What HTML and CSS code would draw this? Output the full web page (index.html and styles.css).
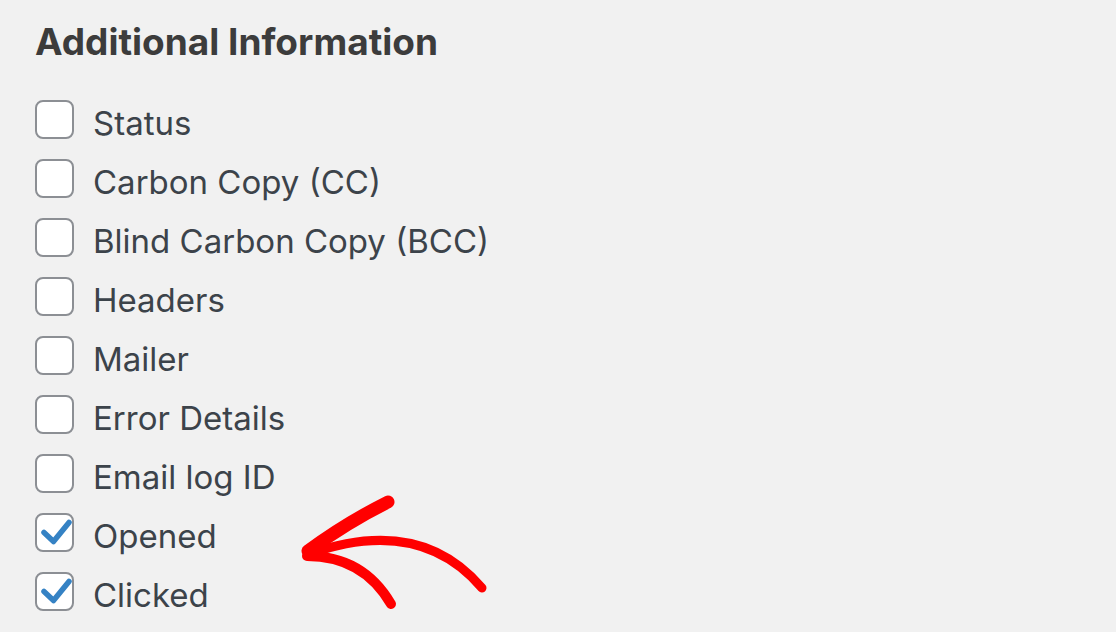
FILE: index.html
```html
<!DOCTYPE html>
<html lang="en">
<head>
    <meta charset="UTF-8">
    <meta name="viewport" content="width=device-width, initial-scale=1.0">
    <title>Additional Information</title>
    <link rel="stylesheet" href="styles.css">
</head>
<body>
    <div class="panel">
        <h2>Additional Information</h2>

        <ul class="field-list">
            <li class="field"><span class="check-box"></span><span class="field-label">Status</span></li>
            <li class="field"><span class="check-box"></span><span class="field-label">Carbon Copy (CC)</span></li>
            <li class="field"><span class="check-box"></span><span class="field-label">Blind Carbon Copy (BCC)</span></li>
            <li class="field"><span class="check-box"></span><span class="field-label">Headers</span></li>
            <li class="field"><span class="check-box"></span><span class="field-label">Mailer</span></li>
            <li class="field"><span class="check-box"></span><span class="field-label">Error Details</span></li>
            <li class="field"><span class="check-box"></span><span class="field-label">Email log ID</span></li>
            <li class="field">
                <span class="check-box checked">
                    <svg viewBox="0 0 39 39"><path d="M9 19.5 L18.5 28.5 L34 9.5" /></svg>
                </span>
                <span class="field-label">Opened</span>
            </li>
            <li class="field">
                <span class="check-box checked">
                    <svg viewBox="0 0 39 39"><path d="M9 19.5 L18.5 28.5 L34 9.5" /></svg>
                </span>
                <span class="field-label">Clicked</span>
            </li>
        </ul>
    </div>

    <!-- hand-drawn annotation arrow -->
    <svg class="annotation" viewBox="0 0 1116 632">
        <path class="stroke-upper" d="M308 551 Q346 523 388 502" />
        <path class="stroke-shaft" d="M309 554 Q420 515 482 588" />
        <path class="stroke-lower" d="M307 556 Q363 556 391 604" />
    </svg>
</body>
</html>
```

FILE: styles.css
```css
body {
    font-family: Inter, "Liberation Sans", Arial, sans-serif;
    background-color: #f1f1f1;
    color: #3c434a;
    margin: 0;
    padding: 0;
    min-height: 632px;
}

.panel {
    padding: 19px 0 0 35px;
}

h2 {
    font-size: 37px;
    font-weight: 700;
    color: #3c3c3c;
    margin: 0 0 25px 0;
    line-height: 46px;
}

.field-list {
    list-style: none;
    margin: 0;
    padding: 0;
}

.field {
    display: flex;
    align-items: center;
    gap: 19px;
    height: 59px;
}

.check-box {
    position: relative;
    box-sizing: border-box;
    width: 39px;
    height: 39px;
    border: 2px solid #8c8f94;
    border-radius: 8px;
    background-color: #fff;
}

.check-box svg {
    position: absolute;
    left: -2px;
    top: -2px;
    width: 39px;
    height: 39px;
    overflow: visible;
}

.check-box path {
    fill: none;
    stroke: #3582c4;
    stroke-width: 5.5;
    stroke-linecap: round;
    stroke-linejoin: round;
}

.field-label {
    font-size: 33px;
    color: #3c434a;
    margin-top: 6px;
}

.annotation {
    position: absolute;
    left: 0;
    top: 0;
    width: 1116px;
    height: 632px;
    pointer-events: none;
}

.annotation path {
    fill: none;
    stroke: #ff0000;
    stroke-linecap: round;
    stroke-linejoin: round;
}

.stroke-upper {
    stroke-width: 13;
}

.stroke-shaft {
    stroke-width: 9;
}

.stroke-lower {
    stroke-width: 10;
}
```
